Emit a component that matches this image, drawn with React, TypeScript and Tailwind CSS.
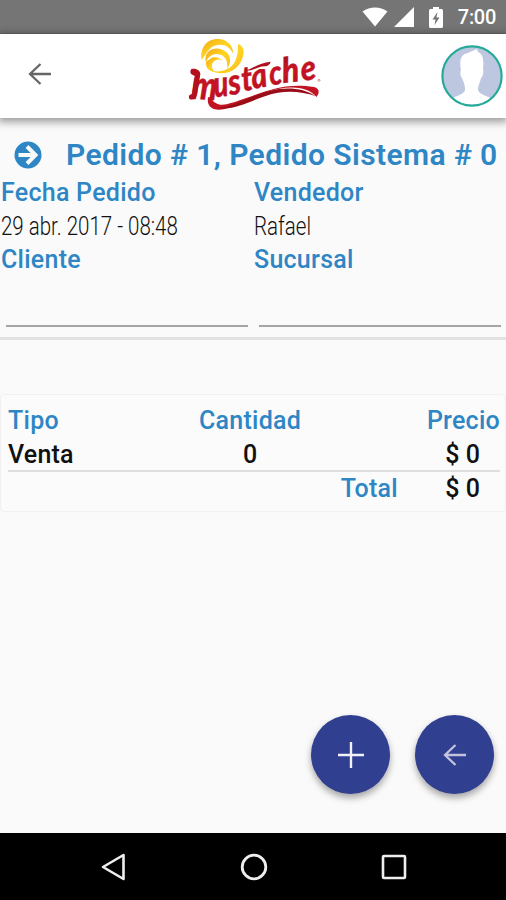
const logoLetters = [
  { char: "m", x: 44, y: 194, size: 118, width: 78, rotate: 3 },
  { char: "u", x: 116, y: 190, size: 108, width: 44, rotate: -6 },
  { char: "s", x: 162, y: 184, size: 108, width: 38, rotate: -10 },
  { char: "t", x: 201, y: 172, size: 104, width: 33, rotate: -8 },
  { char: "a", x: 231, y: 165, size: 104, width: 48, rotate: -10 },
  { char: "c", x: 283, y: 154, size: 104, width: 38, rotate: -6 },
  { char: "h", x: 321, y: 147, size: 104, width: 52, rotate: -6 },
  { char: "e", x: 377, y: 140, size: 104, width: 46, rotate: -6 },
];

const orderRows = [{ type: "Venta", quantity: 0, price: "$ 0" }];

const Logo = () => (
  <svg width="160" height="84" viewBox="0 0 480 252" aria-label="Mustache">
    <defs>
      <linearGradient id="sun" x1="0" y1="0" x2="1" y2="1">
        <stop offset="0" stopColor="#f3a51c" />
        <stop offset="0.5" stopColor="#ffd51f" />
        <stop offset="1" stopColor="#f8bd20" />
      </linearGradient>
      <linearGradient id="red" x1="0" y1="0" x2="0" y2="1">
        <stop offset="0" stopColor="#8f0c16" />
        <stop offset="0.5" stopColor="#c91424" />
        <stop offset="1" stopColor="#b60f1e" />
      </linearGradient>
    </defs>
    <g fill="url(#sun)">
      <path d="M77 78C72 42 91 15 125 15c28 0 46 19 47 44-9-18-24-28-42-27-27 1-36 21-53 46z" />
      <path d="M90 88C82 58 103 41 128 44c31 5 44 32 26 60 2-26-8-42-30-44-18-1-30 11-34 28z" />
      <path d="M90 84c-1 20 10 28 26 29-9-9-11-20-4-29 6-8 18-10 28-4-9-11-26-14-37-6-6 4-8 7-13 10z" />
      <path d="M104 109c13 5 32 4 48-3 25-10 35-38 34-75 15 3 20 18 15 36-8 32-34 51-64 51-14 0-25-3-33-9z" />
    </g>
    <g fill="url(#red)" stroke="#bb1020" strokeWidth="1" fontFamily="Lato, sans-serif" fontWeight="900" fontStyle="italic">
      {logoLetters.map((letter) => (
        <text
          key={letter.char}
          x={letter.x}
          y={letter.y}
          fontSize={letter.size}
          textLength={letter.width}
          lengthAdjust="spacingAndGlyphs"
          transform={`rotate(${letter.rotate} ${letter.x} ${letter.y})`}
        >
          {letter.char}
        </text>
      ))}
    </g>
    <path d="M46 105c-6 9-3 17 10 20l-8 56c-9 0-12 7-7 15 14 3 20-3 23-17l9-58c0-13-14-20-27-16z" fill="#b3101e" />
    <path d="M96 190c-4 24 9 38 34 37 56-4 106-50 180-63 46-8 88-3 112 25 9-13 9-25-8-30-87-14-143 12-205 34-46 16-72 26-90 14-11-7-12-13-8-17z" fill="#c21423" />
    <path d="M124 222c62-5 112-47 184-57 41-5 80 0 112 22-36-13-75-17-114-11-66 11-118 56-182 46z" fill="#980d18" />
    <path d="M205 110c22-4 45-25 79-27-2 9-9 13-16 14-23-1-37 17-63 13z" fill="#ad101e" />
    <circle cx="429" cy="139" r="3" fill="none" stroke="#c9525a" strokeWidth="2" />
  </svg>
);

const BackArrow = ({ className }: { className: string }) => (
  <svg width="24" height="24" viewBox="0 0 24 24" fill="none" className={className}>
    <path d="M23 12H2M12.5 2 2 12l10.5 10" strokeWidth="2.3" />
  </svg>
);

const StatusBar = () => (
  <div className="flex h-[34px] shrink-0 items-center justify-end border-b border-[#686868] bg-[#757575] pr-[10px] pt-px text-white">
    <svg width="26" height="20" viewBox="0 0 26 20" fill="currentColor" className="mr-px">
      <path d="M.5 4.5C8 -1 18 -1 25.500 4.500L13 19.500z" />
    </svg>
    <svg width="20" height="20" viewBox="0 0 20 20" fill="currentColor" className="ml-[5px]">
      <path d="M20 0v20H0z" />
    </svg>
    <svg width="14" height="21" viewBox="0 0 14 21" className="ml-[15px] mr-px">
      <path d="M4 0h6v2h2.500Q14 2 14 3.500v16Q14 21 12.500 21h-11Q0 21 0 19.500v-16Q0 2 1.500 2H4z" fill="currentColor" />
      <path d="M8.500 5 3.500 12.500H6.500L5.500 18l5-7.500H7.500z" fill="#757575" />
    </svg>
    <span className="ml-[14px] text-[20px] leading-none font-medium tracking-[-0.3px]">7:00</span>
  </div>
);

const Header = () => (
  <header className="z-10 flex h-[84px] shrink-0 items-center bg-white pl-7 pr-[3px] shadow-[0_2px_8px_2px_rgba(0,0,0,0.38)]">
    <div className="flex w-[148px] items-center pb-1">
      <BackArrow className="stroke-[#666]" />
    </div>
    <Logo />
    <div className="ml-auto">
      <svg width="62" height="62" viewBox="0 0 62 62">
        <defs>
          <clipPath id="avatar">
            <circle cx="31" cy="31" r="29" />
          </clipPath>
        </defs>
        <g clipPath="url(#avatar)">
          <path d="M0 0h62v62H0z" fill="#bdc7df" />
          <path d="M20 25C18 15 20 9 27 8c3-2 7-3 9-4l1 3c5 2 6 8 5 17 1 2 0 8-2 9-1 5-3 7-3 12 1 5 12 7 18 10v9H7v-9c5-3 16-5 17-10 0-5-1-7-3-12-2-2-2-7-1-8z" fill="#fff" />
        </g>
        <circle cx="31" cy="31" r="29.600" fill="none" stroke="#25a99a" strokeWidth="2.200" />
      </svg>
    </div>
  </header>
);

const Label = ({ children }: { children: string }) => (
  <span className="text-[25px] leading-[34px] font-medium tracking-[0.26px] text-[#2e86c5]">{children}</span>
);

const Field = ({ label, value, next }: { label: string; value: string; next: string }) => (
  <div className="flex flex-1 flex-col">
    <div className="flex flex-col pl-px">
      <Label>{label}</Label>
      <span className="h-[33px] origin-left scale-x-[0.82] whitespace-nowrap text-[25px] leading-[34px] font-light text-[#111]">
        {value}
      </span>
      <Label>{next}</Label>
    </div>
    <div className="ml-[6px] mr-[5px] mt-[48px] h-[2px] bg-[#a5a5a5]" />
  </div>
);

const OrderCard = () => (
  <section className="h-[222px] shrink-0 border-b-[3px] border-[#e1e1e1] pt-[17px]">
    <h1 className="flex h-[41px] items-center pl-[14px] text-[30px] font-semibold text-[#2e86c5]">
      <svg width="28" height="28" viewBox="0 0 28 28" className="mr-[24px] mb-px shrink-0">
        <circle cx="14" cy="14" r="13.500" fill="currentColor" />
        <path d="M4.500 14H21M13 5.500 21.500 14 13 22.500" fill="none" stroke="#fafafa" strokeWidth="4" />
      </svg>
      <span className="pb-[3px] tracking-[0.41px] whitespace-nowrap">Pedido # 1, Pedido Sistema # 0</span>
    </h1>
    <div className="flex">
      <Field label="Fecha Pedido" value="29 abr. 2017 - 08:48" next="Cliente" />
      <Field label="Vendedor" value="Rafael" next="Sucursal" />
    </div>
  </section>
);

const TotalsCard = () => (
  <section className="mt-[54px] h-[118px] rounded-sm border border-[#f1f1f1] bg-[#fbfbfb] pr-[5px] pl-[7px] pt-[9px] text-[25px] leading-[34px] font-medium text-[#111]">
    <div className="flex">
      <div className="w-[150px]"><Label>Tipo</Label></div>
      <div className="w-[184px] text-center"><Label>Cantidad</Label></div>
      <div className="flex-1 text-right"><Label>Precio</Label></div>
    </div>
    {orderRows.map((row) => (
      <div key={row.type} className="flex h-[34px] border-b-2 border-[#dedede]">
        <span className="w-[150px] tracking-[0.2px]">{row.type}</span>
        <span className="w-[184px] text-center">{row.quantity}</span>
        <span className="flex-1 pr-[20px] text-right">{row.price}</span>
      </div>
    ))}
    <div className="flex justify-end">
      <Label>Total</Label>
      <span className="w-[102px] pr-[20px] text-right">$ 0</span>
    </div>
  </section>
);

const fabClass =
  "flex size-[79px] items-center justify-center rounded-full bg-[#303f8f] shadow-[0_4px_7px_rgba(0,0,0,0.35)]";

export default function App() {
  return (
    <div className="flex h-[900px] w-[506px] flex-col overflow-hidden bg-[#fafafa] font-['Roboto',sans-serif]">
      <StatusBar />
      <Header />
      <main className="flex flex-1 flex-col">
        <OrderCard />
        <TotalsCard />
        <div className="mt-auto flex justify-end gap-[25px] pr-[12px] pb-[39px]">
          <button className={fabClass}>
            <svg width="28" height="28" viewBox="0 0 28 28" stroke="#f1f1fa" strokeWidth="2.400">
              <path d="M14 1v26M1 14h26" />
            </svg>
          </button>
          <button className={fabClass}>
            <BackArrow className="stroke-[#c2c2df]" />
          </button>
        </div>
      </main>
      <nav className="flex h-[67px] shrink-0 items-center justify-between bg-black pl-[100px] pr-[98px]">
        <svg width="28" height="30" viewBox="0 0 28 30" fill="none" stroke="#eee" strokeWidth="2.600" strokeLinejoin="round">
          <path d="M23.500 3v24L3 15z" />
        </svg>
        <svg width="28" height="28" viewBox="0 0 28 28" fill="none" stroke="#eee" strokeWidth="2.800">
          <circle cx="14" cy="14" r="11.800" />
        </svg>
        <svg width="28" height="28" viewBox="0 0 28 28" fill="none" stroke="#eee" strokeWidth="2.600">
          <rect x="3" y="3" width="22" height="22" rx="1" />
        </svg>
      </nav>
    </div>
  );
}
